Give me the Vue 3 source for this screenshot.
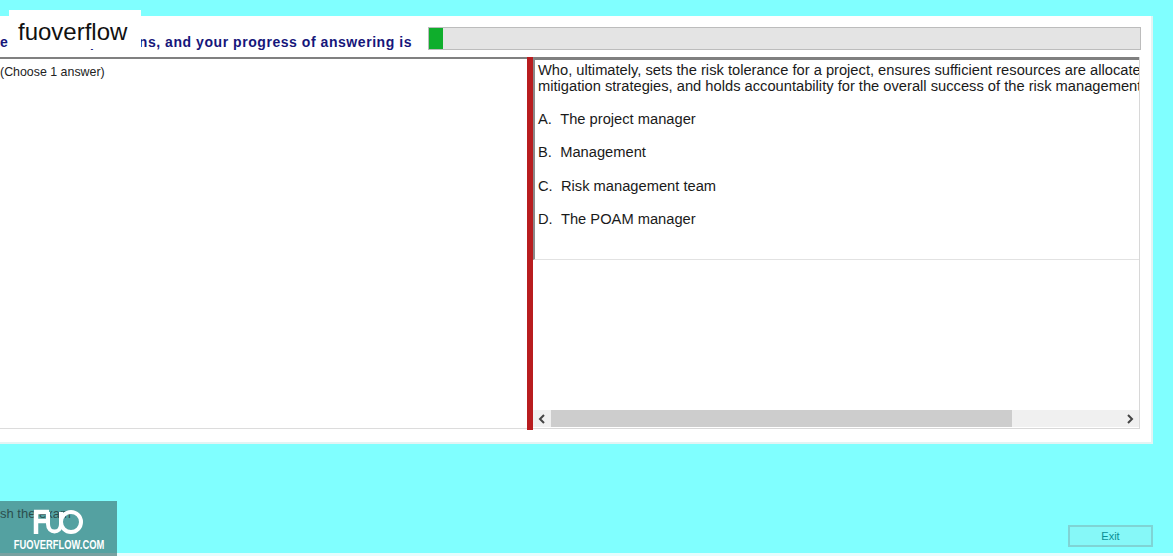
<template>
  <div class="page">
    <div class="brand">fuoverflow</div>

    <section class="panel">
      <div class="progress_row">
        <div class="progress_label">
          <span>the counts of questions, and your progress of answering is</span>
        </div>
        <div class="progress_track">
          <div class="progress_fill" :style="{ width: progress + 'px' }"></div>
        </div>
      </div>

      <div class="split">
        <div class="left_pane">(Choose 1 answer)</div>
        <div class="divider"></div>
        <div class="right_pane">
          <div class="question_box">
            <div class="question_text">
              <p class="question">
                Who, ultimately, sets the risk tolerance for a project, ensures sufficient resources are allocated to<br />
                mitigation strategies, and holds accountability for the overall success of the risk management process?
              </p>
              <p v-for="answer in answers" :key="answer.letter" class="answer">
                <span class="letter">{{ answer.letter }}.</span>{{ answer.text }}
              </p>
            </div>
          </div>
          <div class="scrollbar">
            <svg class="arrow" width="18" height="16" viewBox="0 0 18 16">
              <path d="M11 4 7 8l4 4" fill="none" stroke="#444" stroke-width="2" />
            </svg>
            <div class="scroll_track"><div class="scroll_thumb"></div></div>
            <svg class="arrow" width="18" height="16" viewBox="0 0 18 16">
              <path d="M7 4l4 4-4 4" fill="none" stroke="#444" stroke-width="2" />
            </svg>
          </div>
        </div>
      </div>
    </section>

    <footer class="footer">
      <span class="finish">Finish the exam</span>
      <button class="exit">Exit</button>
    </footer>
    <div class="bottom_strip"></div>

    <div class="watermark">
      <svg width="54" height="26" viewBox="0 0 54 26">
        <path d="M2 3h15M4 3v22M3 12h11" fill="none" stroke="#fff" stroke-width="4.500" />
        <path d="M16 3v12c0 10 13 10 13 0V3" fill="none" stroke="#fff" stroke-width="4" />
        <circle cx="39" cy="13" r="10" fill="none" stroke="#fff" stroke-width="4" />
      </svg>
      <div class="watermark_text">FUOVERFLOW.COM</div>
    </div>
  </div>
</template>

<script setup>
const progress = 14

const answers = [
  { letter: 'A', text: 'The project manager' },
  { letter: 'B', text: 'Management' },
  { letter: 'C', text: 'Risk management team' },
  { letter: 'D', text: 'The POAM manager' }
]
</script>

<style>
html,
body {
  margin: 0;
  overflow: hidden;
}
</style>

<style scoped>
.page {
  position: relative;
  width: 1173px;
  height: 556px;
  padding-top: 16px;
  box-sizing: border-box;
  display: flex;
  flex-direction: column;
  overflow: hidden;
  background: #80ffff;
  font-family: "Liberation Sans", Arial, sans-serif;
  color: #1a1a1a;
}

.brand {
  position: absolute;
  left: 9px;
  top: 10px;
  width: 132px;
  height: 39px;
  padding-left: 9px;
  box-sizing: border-box;
  background: #ffffff;
  color: #111111;
  font-size: 24px;
  line-height: 43px;
  z-index: 2;
}

.panel {
  width: 1153px;
  height: 428px;
  flex: 0 0 auto;
  box-sizing: border-box;
  background: #ffffff;
  border-right: 2px solid #e4f4f4;
  border-bottom: 2px solid #e4f4f4;
  display: flex;
  flex-direction: column;
}

.progress_row {
  height: 41px;
  padding-top: 11px;
  box-sizing: border-box;
  display: flex;
}

.progress_label {
  width: 428px;
  height: 23px;
  padding-right: 16px;
  box-sizing: border-box;
  display: flex;
  justify-content: flex-end;
  overflow: hidden;
  white-space: nowrap;
  flex: 0 0 auto;
}

.progress_label span {
  font-size: 14px;
  font-weight: bold;
  line-height: 31px;
  letter-spacing: 0.55px;
  color: #16167a;
}

.progress_track {
  width: 713px;
  height: 23px;
  box-sizing: border-box;
  background: #e4e4e4;
  border: 1px solid #bcbcbc;
  flex: 0 0 auto;
}

.progress_fill {
  height: 100%;
  background: #0fae2c;
}

.split {
  height: 373px;
  display: flex;
  flex: 0 0 auto;
}

.left_pane {
  width: 527px;
  height: 372px;
  box-sizing: border-box;
  border-top: 2px solid #808080;
  border-bottom: 1px solid #dcdcdc;
  font-size: 12.400px;
  line-height: 14px;
  padding-top: 6px;
  color: #222222;
  flex: 0 0 auto;
}

.divider {
  width: 6px;
  height: 373px;
  background: #b81c1f;
  flex: 0 0 auto;
}

.right_pane {
  width: 607px;
  height: 372px;
  box-sizing: border-box;
  border-right: 1px solid #d8d8d8;
  border-bottom: 1px solid #d8d8d8;
  display: flex;
  flex-direction: column;
  flex: 0 0 auto;
}

.question_box {
  height: 203px;
  box-sizing: border-box;
  border-top: 3px solid #808080;
  border-left: 2px solid #8a8a8a;
  border-bottom: 1px solid #e2e2e2;
  overflow: hidden;
  flex: 0 0 auto;
}

.question_text {
  padding: 2px 0 0 3px;
  white-space: nowrap;
  font-size: 14.700px;
  line-height: 16px;
}

.question {
  margin: 0 0 17px;
}

.answer {
  margin: 0 0 17.300px;
}

.letter {
  display: inline-block;
  margin-right: 8.300px;
}

.scrollbar {
  margin-top: auto;
  margin-bottom: 1px;
  height: 17px;
  background: #f0f0f0;
  display: flex;
  align-items: center;
  flex: 0 0 auto;
}

.arrow {
  flex: 0 0 auto;
}

.scroll_track {
  flex: 1 1 auto;
  height: 100%;
}

.scroll_thumb {
  width: 461px;
  height: 100%;
  background: #cdcdcd;
}

.footer {
  flex: 1 1 auto;
  display: flex;
  justify-content: space-between;
  align-items: flex-start;
}

.finish {
  margin: 63px 0 0 -21px;
  font-size: 13px;
  line-height: 14px;
  color: #0a0a0a;
}

.exit {
  width: 85px;
  height: 22px;
  margin: 81px 20px 0 0;
  padding: 0;
  box-sizing: border-box;
  background: #86f8f8;
  border: 2px solid #7fd4d5;
  color: #0a8f96;
  font-family: "Liberation Sans", Arial, sans-serif;
  font-size: 11px;
}

.bottom_strip {
  height: 3px;
  background: #e6fdfd;
  flex: 0 0 auto;
}

.watermark {
  position: absolute;
  left: 0;
  bottom: 0;
  width: 117px;
  height: 55px;
  padding-top: 8px;
  box-sizing: border-box;
  background: rgba(60, 110, 110, 0.65);
  display: flex;
  flex-direction: column;
  align-items: center;
  color: #ffffff;
}

.watermark_text {
  margin-top: 3px;
  font-size: 12px;
  line-height: 14px;
  font-weight: bold;
  white-space: nowrap;
  transform: scaleX(0.78);
}
</style>
